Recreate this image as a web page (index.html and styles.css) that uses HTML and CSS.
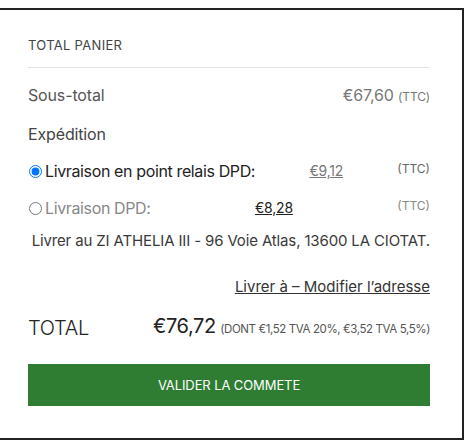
FILE: index.html
```html
<!DOCTYPE html>
<html lang="fr">
<head>
<meta charset="utf-8">
<link rel="stylesheet" href="styles.css">
</head>
<body>
<div class="cart">
  <h2 class="cart-title">TOTAL PANIER</h2>
  <div class="line subtotal">
    <span class="label">Sous-total</span>
    <span class="value">€67,60 <small class="ttc">(TTC)</small></span>
  </div>
  <div class="line shipping-title">Expédition</div>
  <label class="ship-option active">
    <span class="ship-label"><input type="radio" name="ship" checked>Livraison en point relais DPD:</span>
    <span class="ship-price">€9,12</span>
    <span class="ship-ttc">(TTC)</span>
  </label>
  <label class="ship-option muted">
    <span class="ship-label"><input type="radio" name="ship">Livraison DPD:</span>
    <span class="ship-price dark">€8,28</span>
    <span class="ship-ttc">(TTC)</span>
  </label>
  <p class="address">Livrer au ZI ATHELIA III - 96 Voie Atlas, 13600 LA CIOTAT.</p>
  <p class="change"><a href="#">Livrer à – Modifier l’adresse</a></p>
  <div class="total">
    <span class="total-label">TOTAL</span>
    <span class="total-value"><span class="amount">€76,72</span> <small class="tax">(DONT €1,52 TVA 20%, €3,52 TVA 5,5%)</small></span>
  </div>
  <button class="checkout" type="button">VALIDER LA COMMETE</button>
</div>
</body>
</html>
```

FILE: styles.css
```css
html, body {
  margin: 0;
  padding: 0;
  background: #fff;
}
body {
  font-family: Inter, "Noto Sans", sans-serif;
  color: #333;
}
.cart {
  box-sizing: border-box;
  width: 470px;
  height: 432px;
  margin: 8px 0 0 -6px;
  border: 2px solid #222;
  padding: 0 32px;
  display: flex;
  flex-direction: column;
}
.cart-title {
  margin: 0;
  padding: 27px 0 14px;
  font-size: 13px;
  line-height: 16px;
  font-weight: 400;
  color: #444;
  letter-spacing: 0.3px;
  border-bottom: 1px solid #e2e2e2;
}
.line {
  font-size: 16px;
  line-height: 24px;
  letter-spacing: -0.15px;
}
.subtotal {
  margin-top: 15px;
  display: flex;
  justify-content: space-between;
  align-items: baseline;
  color: #555;
}
.subtotal .value {
  color: #777;
}
.ttc {
  font-size: 12px;
  color: #777;
}
.shipping-title {
  margin-top: 13px;
  color: #444;
}
.ship-option {
  margin-top: 13px;
  display: flex;
  justify-content: space-between;
  align-items: flex-start;
  font-size: 16px;
  line-height: 24px;
}
.ship-label {
  display: flex;
  align-items: center;
  letter-spacing: -0.37px;
}
.ship-option input {
  margin: 0 3px 0 1px;
  width: 13px;
  height: 13px;
}
.active .ship-label { color: #222; }
.muted .ship-label { color: #888; }
.ship-price {
  font-size: 14px;
  color: #777;
  letter-spacing: -0.2px;
  text-decoration: underline;
}
.ship-price.dark { color: #222; }
.ship-ttc {
  font-size: 12px;
  line-height: 20px;
  color: #666;
}
.muted .ship-ttc { color: #888; }
.address {
  margin: 10px 0 0;
  font-size: 15px;
  line-height: 22px;
  text-align: right;
  white-space: nowrap;
  letter-spacing: -0.14px;
  color: #3a3a3a;
}
.change {
  margin: 24px 0 0;
  font-size: 15px;
  line-height: 22px;
  text-align: right;
}
.change a {
  color: #333;
  text-decoration: underline;
}
.total {
  margin-top: 16px;
  display: flex;
  justify-content: space-between;
  align-items: baseline;
}
.total-label {
  font-size: 20px;
  font-weight: 300;
  color: #222;
  letter-spacing: -0.3px;
  position: relative;
  top: 2px;
}
.amount {
  font-size: 20px;
  color: #222;
  letter-spacing: -0.4px;
}
.tax {
  font-size: 11.5px;
  color: #555;
  letter-spacing: -0.4px;
}
.checkout {
  margin-top: auto;
  margin-bottom: 32px;
  height: 42px;
  border: 0;
  background: #2e7d32;
  color: #fff;
  font-family: inherit;
  font-size: 13px;
  letter-spacing: -0.1px;
  cursor: pointer;
}
```
